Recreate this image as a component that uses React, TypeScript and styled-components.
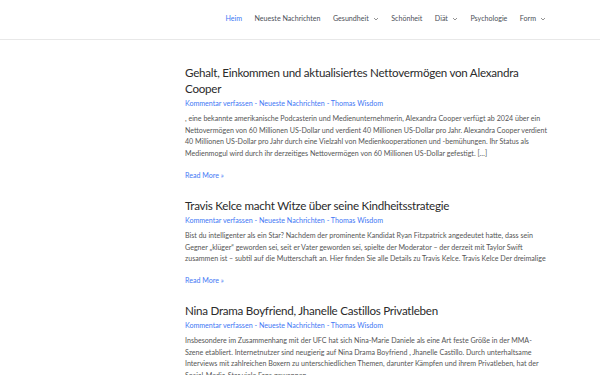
import React from "react";
import styled, { createGlobalStyle } from "styled-components";

const Global = createGlobalStyle`
  html, body { margin: 0; padding: 0; background: #fff; }
  body { font-family: Lato, "Open Sans", sans-serif; color: #555; }
  * { box-sizing: border-box; }
`;

const Header = styled.header`
  height: 40px;
  border-bottom: 1px solid #e8e8e8;
  display: flex;
  justify-content: flex-end;
  align-items: center;
  padding-right: 54px;
`;

const Nav = styled.nav`
  display: flex;
  align-items: center;
  gap: 12.5px;
  margin-top: -2px;
`;

const NavItem = styled.a<{ $active?: boolean }>`
  display: flex;
  align-items: center;
  gap: 4px;
  font-size: 7.1px;
  color: ${(p) => (p.$active ? "#3f78f5" : "#4b4f58")};
  text-decoration: none;
  white-space: nowrap;
`;

const Chevron = () => (
  <svg width="6" height="4" viewBox="0 0 6 4" fill="none">
    <path d="M1 1l2 2 2-2" stroke="#777" strokeWidth="0.8" />
  </svg>
);

const Main = styled.main`
  width: 362px;
  margin-left: 185px;
  padding-top: 25px;
`;

const Article = styled.article`
  margin-bottom: 16px;
`;

const Title = styled.h2`
  margin: 0;
  font-size: 11.6px;
  letter-spacing: -0.25px;
  line-height: 16px;
  font-weight: 400;
  color: #2b2b2b;
`;

const Meta = styled.div`
  margin-top: 1px;
  font-size: 7.1px;
  line-height: 12px;
  color: #3f78f5;
`;

const Body = styled.p`
  margin: 3px 0 0;
  font-size: 7.1px;
  line-height: 11.7px;
  color: #555;
`;

const ReadMore = styled.a`
  display: block;
  margin-top: 10px;
  font-size: 7.1px;
  line-height: 12px;
  color: #3f78f5;
  text-decoration: none;
`;

const posts = [
  {
    title: "Gehalt, Einkommen und aktualisiertes Nettovermögen von Alexandra Cooper",
    body:
      ", eine bekannte amerikanische Podcasterin und Medienunternehmerin, Alexandra Cooper verfügt ab 2024 über ein Nettovermögen von 60 Millionen US-Dollar und verdient 40 Millionen US-Dollar pro Jahr. Alexandra Cooper verdient 40 Millionen US-Dollar pro Jahr durch eine Vielzahl von Medienkooperationen und -bemühungen. Ihr Status als Medienmogul wird durch ihr derzeitiges Nettovermögen von 60 Millionen US-Dollar gefestigt. […]",
  },
  {
    title: "Travis Kelce macht Witze über seine Kindheitsstrategie",
    body:
      "Bist du intelligenter als ein Star? Nachdem der prominente Kandidat Ryan Fitzpatrick angedeutet hatte, dass sein Gegner „klüger“ geworden sei, seit er Vater geworden sei, spielte der Moderator – der derzeit mit Taylor Swift zusammen ist – subtil auf die Mutterschaft an. Hier finden Sie alle Details zu Travis Kelce. Travis Kelce   Der dreimalige",
  },
  {
    title: "Nina Drama Boyfriend, Jhanelle Castillos Privatleben",
    body:
      "Insbesondere im Zusammenhang mit der UFC hat sich Nina-Marie Daniele als eine Art feste Größe in der MMA-Szene etabliert. Internetnutzer sind neugierig auf Nina Drama Boyfriend , Jhanelle Castillo. Durch unterhaltsame Interviews mit zahlreichen Boxern zu unterschiedlichen Themen, darunter Kämpfen und ihrem Privatleben, hat der Social-Media-Star viele Fans gewonnen.",
  },
];

export default function App() {
  return (
    <>
      <Global />
      <Header>
        <Nav>
          <NavItem $active>Heim</NavItem>
          <NavItem>Neueste Nachrichten</NavItem>
          <NavItem>Gesundheit <Chevron /></NavItem>
          <NavItem>Schönheit</NavItem>
          <NavItem>Diät <Chevron /></NavItem>
          <NavItem>Psychologie</NavItem>
          <NavItem>Form <Chevron /></NavItem>
        </Nav>
      </Header>
      <Main>
        {posts.map((p) => (
          <Article key={p.title}>
            <Title>{p.title}</Title>
            <Meta>Kommentar verfassen - Neueste Nachrichten - Thomas Wisdom</Meta>
            <Body>{p.body}</Body>
            <ReadMore>Read More »</ReadMore>
          </Article>
        ))}
      </Main>
    </>
  );
}
